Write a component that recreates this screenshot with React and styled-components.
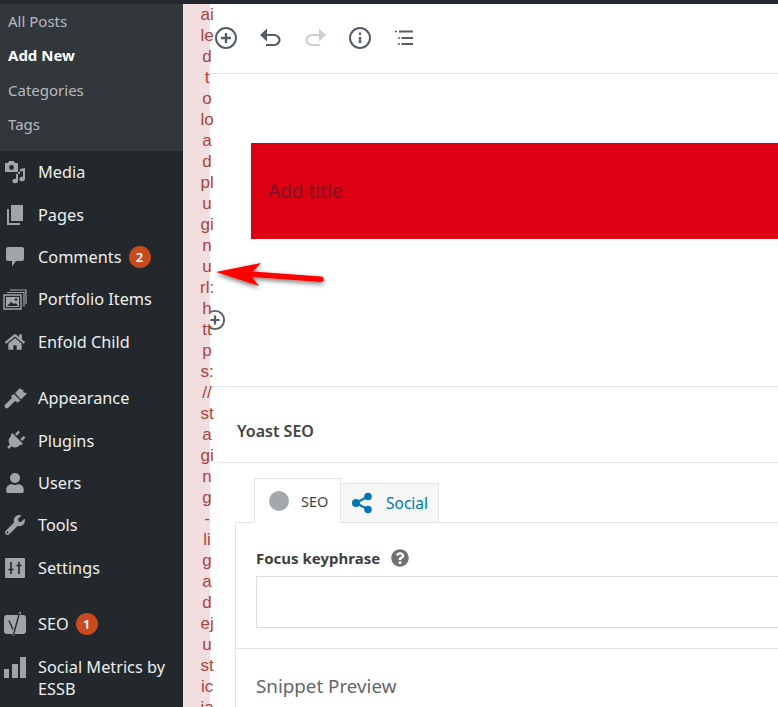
import styled, { createGlobalStyle } from "styled-components";
import { FaHome, FaPlug, FaUser, FaWrench, FaQuestionCircle } from "react-icons/fa";

const GlobalStyle = createGlobalStyle`
  html, body {
    margin: 0;
    padding: 0;
    height: 100%;
    overflow: hidden;
    background: #fff;
  }
  #root { height: 100%; }
  * { box-sizing: border-box; }
`;

const Page = styled.div`
  position: relative;
  display: flex;
  flex-direction: column;
  width: 778px;
  height: 707px;
  overflow: hidden;
  font-family: "Noto Sans", "Open Sans", sans-serif;
`;

const TopBar = styled.div`
  flex: none;
  height: 4px;
  background: #23282d;
  position: relative;
  z-index: 3;
`;

const Body = styled.div`
  flex: 1;
  display: flex;
  min-height: 0;
`;

const Sidebar = styled.nav`
  flex: none;
  width: 183px;
  background: #23282d;
  position: relative;
  z-index: 3;
`;

const SubMenu = styled.ul`
  list-style: none;
  margin: 0;
  padding: 0 0 10px;
  background: #32373c;
`;

const SubItem = styled.li`
  height: 34.25px;
  padding-left: 8px;
  display: flex;
  align-items: center;
  font-size: 15px;
  color: ${(p) => (p.$active ? "#fff" : "rgba(240,245,250,0.7)")};
  font-weight: ${(p) => (p.$active ? 700 : 400)};
`;

const MenuGroup = styled.ul`
  list-style: none;
  margin: 0 0 14px;
  padding: 0;
`;

const MenuItem = styled.li`
  display: flex;
  align-items: ${(p) => (p.$tall ? "flex-start" : "center")};
  min-height: 42.4px;
  padding-top: ${(p) => (p.$tall ? "11px" : "0")};
  color: #eee;
  font-size: 16.3px;
  line-height: 22px;
`;

const IconSlot = styled.span`
  flex: none;
  width: 38px;
  display: flex;
  justify-content: center;
  padding-right: 8px;
  padding-top: ${(p) => (p.$tall ? "1px" : "0")};
  color: #a0a5aa;
  font-size: 20px;
  line-height: 0;
`;

const Badge = styled.span`
  flex: none;
  margin-left: 7px;
  width: 22px;
  height: 22px;
  border-radius: 50%;
  background: #ca4a1f;
  color: #fff;
  font-size: 13px;
  font-weight: 600;
  display: flex;
  align-items: center;
  justify-content: center;
`;

const PlugIcon = styled(FaPlug)`
  transform: rotate(45deg);
`;

const ErrorStrip = styled.div`
  flex: none;
  width: 27px;
  height: 100%;
  background: #f2dede;
  position: relative;
  z-index: 2;
`;

const ErrorText = styled.div`
  margin: -21px 0 0 17px;
  width: 14.17px;
  font-family: "Liberation Sans", Arial, sans-serif;
  font-size: 17px;
  line-height: 21px;
  color: #a94442;
  text-align: center;
  overflow-wrap: break-word;
`;

const Main = styled.main`
  flex: 1;
  min-width: 0;
  display: flex;
  flex-direction: column;
  position: relative;
`;

const Toolbar = styled.div`
  flex: none;
  height: 70px;
  border-bottom: 1px solid #e2e4e7;
  display: flex;
  align-items: center;
  gap: 20.5px;
  padding: 0 0 1px 4px;
`;

const ToolIcon = styled.svg`
  width: 24px;
  height: 24px;
  flex: none;
  color: ${(p) => (p.$disabled ? "#ccd0d4" : "#555d66")};
`;

const EditorArea = styled.section`
  flex: none;
  height: 313px;
  padding: 69px 0 0 41px;
  position: relative;
  border-bottom: 1px solid #e2e4e7;
`;

const TitleBlock = styled.div`
  height: 96px;
  background: #dd0012;
  display: flex;
  align-items: center;
  padding: 0 0 0 17px;
  font-size: 19px;
  color: #7d1624;
`;

const BlockInserter = styled.svg`
  position: absolute;
  left: -6px;
  top: 235px;
  width: 22px;
  height: 22px;
  color: #555d66;
`;

const Arrow = styled.svg`
  position: absolute;
  left: 210px;
  top: 250px;
  width: 130px;
  height: 50px;
  z-index: 4;
  overflow: visible;
`;

const MetaBox = styled.section`
  flex: 1;
  min-height: 0;
  margin-left: 7px;
  border-left: 1px solid #f7f7f7;
`;

const MetaHeader = styled.h2`
  margin: 0;
  height: 76px;
  border-bottom: 1px solid #e2e4e7;
  padding: 33px 0 0 19px;
  font-size: 16px;
  line-height: 22px;
  font-weight: 600;
  color: #444;
`;

const MetaBody = styled.div`
  padding: 15px 0 0 17px;
`;

const Tabs = styled.div`
  display: flex;
  align-items: flex-end;
  margin-left: 19px;
  height: 45px;
  position: relative;
  z-index: 1;
  margin-bottom: -1px;
`;

const Tab = styled.div`
  display: flex;
  align-items: center;
  height: ${(p) => (p.$active ? "45px" : "40px")};
  width: ${(p) => (p.$active ? "87px" : "98px")};
  padding-left: ${(p) => (p.$active ? "14px" : "11px")};
  gap: ${(p) => (p.$active ? "12px" : "14px")};
  border: 1px solid #e2e4e7;
  border-left-width: ${(p) => (p.$active ? "1px" : "0")};
  border-bottom: ${(p) => (p.$active ? "1px solid #fff" : "1px solid #e2e4e7")};
  background: ${(p) => (p.$active ? "#fff" : "#f7f7f7")};
  color: ${(p) => (p.$active ? "#444" : "#0075b3")};
  font-size: ${(p) => (p.$active ? "14.5px" : "15.5px")};
`;

const Dot = styled.span`
  width: 20px;
  height: 20px;
  border-radius: 50%;
  background: #a4a7ab;
`;

const Panel = styled.div`
  height: 300px;
  border: 1px solid #e2e4e7;
  border-right: 0;
`;

const KeyphraseBlock = styled.div`
  height: 126px;
  padding: 23px 0 0 20px;
  border-bottom: 1px solid #e2e4e7;
`;

const FieldLabel = styled.div`
  display: flex;
  align-items: center;
  gap: 11px;
  height: 24px;
  font-size: 15px;
  font-weight: 700;
  color: #404040;
`;

const HelpIcon = styled.span`
  font-size: 18px;
  line-height: 0;
  color: #707070;
`;

const KeyInput = styled.div`
  margin-top: 6px;
  height: 52px;
  border: 1px solid #ddd;
  border-right: 0;
`;

const SnippetTitle = styled.div`
  padding: 24px 0 0 20px;
  font-size: 18.8px;
  line-height: 26px;
  color: #666;
`;

const MediaIcon = () => (
  <svg width="24" height="24" viewBox="0 0 24 24" fill="currentColor">
    <path d="M2 3h3l1-2h5l1 2h3v9H2z" />
    <circle cx="8.5" cy="7.5" r="2.4" fill="#23282d" />
    <path d="M22 8v11a2.8 2.3 0 1 1-2-2.2V11l-5 1v9a2.8 2.3 0 1 1-2-2.2V14h4v-5z" />
  </svg>
);

const PagesIcon = () => (
  <svg width="20" height="22" viewBox="0 0 20 22" fill="currentColor">
    <path d="M6 1h12v16H6z" />
    <path d="M2 5h2v14h11v2H2z" />
  </svg>
);

const CommentIcon = () => (
  <svg width="18" height="20" viewBox="0 0 18 20" fill="currentColor">
    <path d="M2 0h14a2 2 0 0 1 2 2v10a2 2 0 0 1-2 2h-6l-4 5.5V14H2a2 2 0 0 1-2-2V2a2 2 0 0 1 2-2z" />
  </svg>
);

const PortfolioIcon = () => (
  <svg width="24" height="22" viewBox="0 0 24 22" fill="none" stroke="currentColor">
    <path d="M1 7h17v14H1z" strokeWidth="1.4" />
    <path d="M4 4.5h17v14M7 2h16v14" strokeWidth="1.2" />
    <path d="M3 9h13v10H3z" fill="currentColor" stroke="none" />
    <path d="M4 18l4-4 3 2 2-1 2 3z" fill="#23282d" stroke="none" />
    <circle cx="13" cy="11.5" r="1.3" fill="#23282d" stroke="none" />
  </svg>
);

const BrushIcon = () => (
  <svg width="24" height="21" viewBox="0 0 24 21" fill="currentColor">
    <path d="M12 5l5-5 1.5 2 2-.5-.5 2.5 4 1.5-6 6z" />
    <path d="M11 6l6.5 6.5-3 2-2.5-1.5-6.5 6.5a2.2 2.2 0 0 1-3.3-3l6.8-6.5-1-2z" />
  </svg>
);

const SettingsIcon = () => (
  <svg width="20" height="20" viewBox="0 0 20 20">
    <rect width="20" height="20" rx="1" fill="currentColor" />
    <path
      d="M6 4v12M3.5 11.5h5M14 4v12M11.5 7.5h5"
      stroke="#23282d"
      strokeWidth="1.6"
      fill="none"
    />
  </svg>
);

const YoastIcon = () => (
  <svg width="22" height="25" viewBox="0 0 22 25">
    <rect y="3" width="22" height="19" rx="3" fill="currentColor" />
    <path d="M15 0h2.200L10 24H7.500z" fill="currentColor" />
    <path
      d="M5 8.500l4 9M15.500 1L9.500 22.500 7.500 24"
      stroke="#23282d"
      strokeWidth="1.3"
      fill="none"
    />
  </svg>
);

const BarsIcon = () => (
  <svg width="22" height="22" viewBox="0 0 22 22" fill="currentColor">
    <path d="M0 12h5v9H0zM8 7h6v14H8zM16 0h6v21h-6z" />
  </svg>
);

const ShareIcon = () => (
  <svg width="20" height="22" viewBox="0 0 20 22" fill="#0075b3">
    <circle cx="4" cy="11" r="4" />
    <circle cx="16" cy="4.5" r="3.8" />
    <circle cx="16" cy="17.5" r="3.8" />
    <path d="M4 11L16 4.5M4 11l12 6.5" stroke="#0075b3" strokeWidth="2" />
  </svg>
);

const menuGroups = [
  [
    { label: "Media", icon: <MediaIcon /> },
    { label: "Pages", icon: <PagesIcon /> },
    { label: "Comments", icon: <CommentIcon />, badge: 2 },
    { label: "Portfolio Items", icon: <PortfolioIcon /> },
    { label: "Enfold Child", icon: <FaHome /> },
  ],
  [
    { label: "Appearance", icon: <BrushIcon /> },
    { label: "Plugins", icon: <PlugIcon /> },
    { label: "Users", icon: <FaUser /> },
    { label: "Tools", icon: <FaWrench /> },
    { label: "Settings", icon: <SettingsIcon /> },
  ],
  [
    { label: "SEO", icon: <YoastIcon />, badge: 1 },
    { label: "Social Metrics by ESSB", icon: <BarsIcon />, tall: true },
  ],
];

export default function App() {
  return (
    <Page>
      <GlobalStyle />
      <TopBar />
      <Body>
        <Sidebar>
          <SubMenu>
            <SubItem>All Posts</SubItem>
            <SubItem $active>Add New</SubItem>
            <SubItem>Categories</SubItem>
            <SubItem>Tags</SubItem>
          </SubMenu>
          {menuGroups.map((group, i) => (
            <MenuGroup key={i}>
              {group.map((item) => (
                <MenuItem key={item.label} $tall={item.tall}>
                  <IconSlot $tall={item.tall}>{item.icon}</IconSlot>
                  <span>{item.label}</span>
                  {item.badge && <Badge>{item.badge}</Badge>}
                </MenuItem>
              ))}
            </MenuGroup>
          ))}
        </Sidebar>

        <ErrorStrip>
          <ErrorText>Failed to load plugin url: https://staging-ligadejusticia</ErrorText>
        </ErrorStrip>

        <Main>
          <Toolbar>
            <ToolIcon viewBox="0 0 24 24" fill="none" stroke="currentColor">
              <circle cx="12" cy="12" r="10" strokeWidth="2" />
              <path d="M12 7v10M7 12h10" strokeWidth="2.4" />
            </ToolIcon>
            <ToolIcon viewBox="0 0 24 24" fill="none" stroke="currentColor">
              <path d="M1 9l7-6.500v13z" fill="currentColor" stroke="none" />
              <path d="M7 9h8a5.500 5 0 0 1 0 10H7" strokeWidth="2.2" />
            </ToolIcon>
            <ToolIcon $disabled viewBox="0 0 24 24" fill="none" stroke="currentColor">
              <path d="M23 9l-7-6.500v13z" fill="currentColor" stroke="none" />
              <path d="M17 9H9a5.500 5 0 0 0 0 10h8" strokeWidth="2.2" />
            </ToolIcon>
            <ToolIcon viewBox="0 0 24 24" fill="none" stroke="currentColor">
              <circle cx="12" cy="12" r="10" strokeWidth="2" />
              <path d="M12 11v6" strokeWidth="2.4" />
              <path d="M12 6.500v2.400" strokeWidth="2.4" />
            </ToolIcon>
            <ToolIcon viewBox="0 0 24 24" fill="none" stroke="currentColor">
              <path d="M7 5.500h14M9.500 12h11.500M9.500 18h11.500" strokeWidth="1.8" />
              <path d="M3 5.500h2M6 12h2M6 18h2" strokeWidth="1.4" />
            </ToolIcon>
          </Toolbar>

          <EditorArea>
            <TitleBlock>Add title</TitleBlock>
            <BlockInserter viewBox="0 0 24 24" fill="none" stroke="currentColor">
              <circle cx="12" cy="12" r="10" strokeWidth="2" />
              <path d="M12 7v10M7 12h10" strokeWidth="2.4" />
            </BlockInserter>
          </EditorArea>

          <MetaBox>
            <MetaHeader>Yoast SEO</MetaHeader>
            <MetaBody>
              <Tabs>
                <Tab $active>
                  <Dot />
                  SEO
                </Tab>
                <Tab>
                  <ShareIcon />
                  Social
                </Tab>
              </Tabs>
              <Panel>
                <KeyphraseBlock>
                  <FieldLabel>
                    Focus keyphrase
                    <HelpIcon>
                      <FaQuestionCircle />
                    </HelpIcon>
                  </FieldLabel>
                  <KeyInput />
                </KeyphraseBlock>
                <SnippetTitle>Snippet Preview</SnippetTitle>
              </Panel>
            </MetaBody>
          </MetaBox>
        </Main>
      </Body>

      <Arrow viewBox="0 0 130 50">
        <defs>
          <filter id="arrowShadow" x="-20%" y="-40%" width="140%" height="200%">
            <feDropShadow dx="0" dy="2" stdDeviation="2.5" floodColor="#000" floodOpacity="0.55" />
          </filter>
        </defs>
        <g filter="url(#arrowShadow)" fill="#fe0000">
          <path d="M6 22L51 13L43 21.5L111 26.5a2.6 2.6 0 0 1 0 5.5L42 27L49 36z" />
        </g>
      </Arrow>
    </Page>
  );
}
